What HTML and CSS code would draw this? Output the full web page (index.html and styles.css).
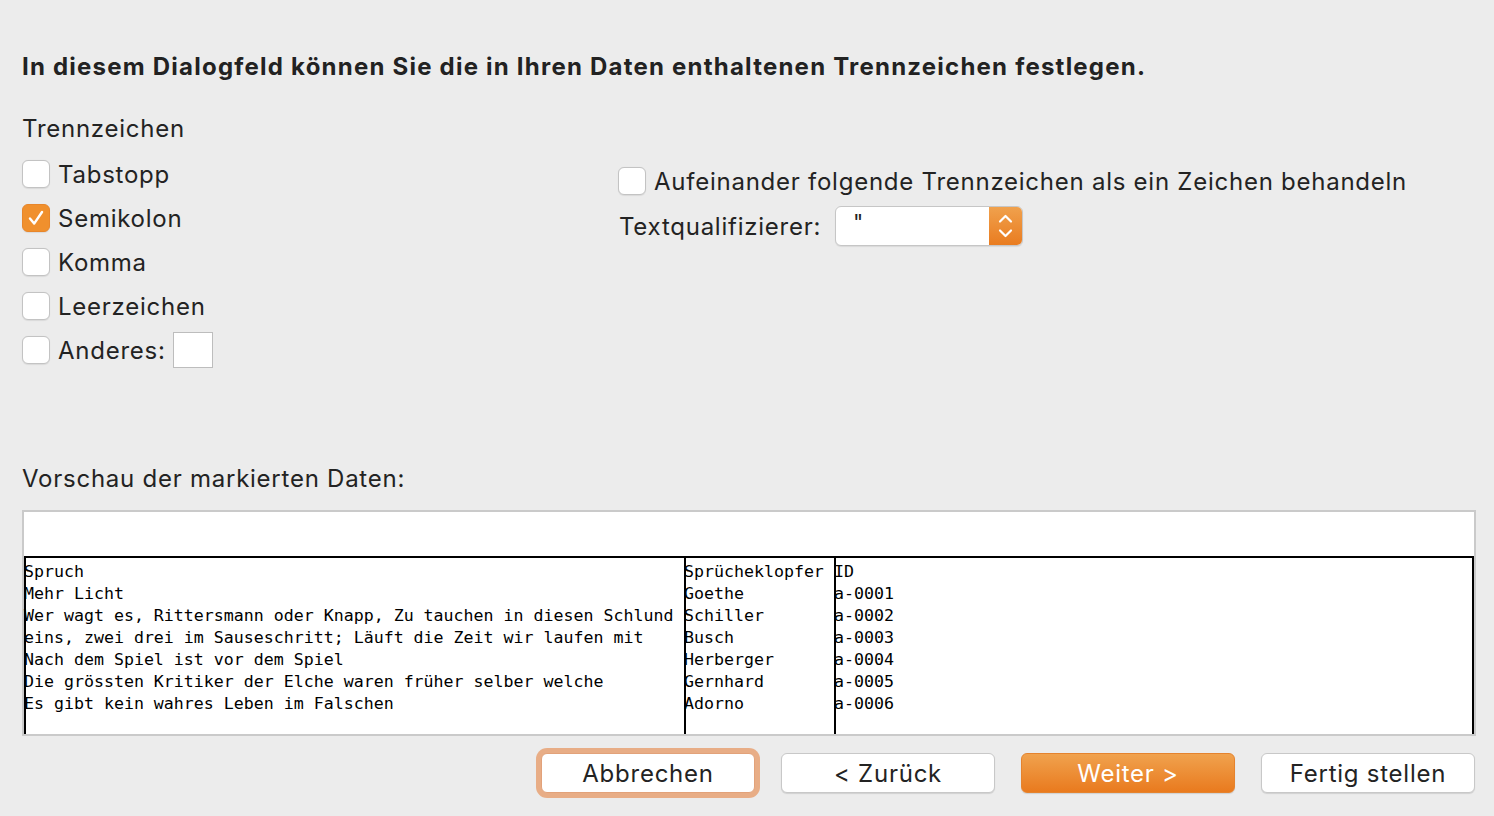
FILE: index.html
```html
<!DOCTYPE html>
<html lang="de">
<head>
<meta charset="utf-8">
<title>Textkonvertierungs-Assistent</title>
<link rel="stylesheet" href="styles.css">
</head>
<body>
<div class="dialog">
  <h1 class="title">In diesem Dialogfeld können Sie die in Ihren Daten enthaltenen Trennzeichen festlegen.</h1>

  <div class="options">
    <div class="col-left">
      <div class="group-label">Trennzeichen</div>
      <label class="check-row"><span class="box"></span><span>Tabstopp</span></label>
      <label class="check-row"><span class="box checked"><svg viewBox="0 0 28 28" width="28" height="28"><path d="M7.5 14.5 L12 20 L20.5 7.5" fill="none" stroke="#fff" stroke-width="2.6" stroke-linecap="round" stroke-linejoin="round"/></svg></span><span>Semikolon</span></label>
      <label class="check-row"><span class="box"></span><span>Komma</span></label>
      <label class="check-row"><span class="box"></span><span>Leerzeichen</span></label>
      <label class="check-row"><span class="box"></span><span>Anderes:</span><span class="other-input"></span></label>
    </div>
    <div class="col-right">
      <label class="check-row"><span class="box"></span><span>Aufeinander folgende Trennzeichen als ein Zeichen behandeln</span></label>
      <div class="qual-row">
        <span>Textqualifizierer:</span>
        <div class="select">
          <span class="select-value">"</span>
          <span class="stepper"><svg viewBox="0 0 33 40" width="33" height="40"><path d="M11 15.5 L16.5 10 L22 15.5" fill="none" stroke="#fff" stroke-width="2.2" stroke-linecap="round" stroke-linejoin="round"/><path d="M11 24.5 L16.5 30 L22 24.5" fill="none" stroke="#fff" stroke-width="2.2" stroke-linecap="round" stroke-linejoin="round"/></svg></span>
        </div>
      </div>
    </div>
  </div>

  <div class="preview-label">Vorschau der markierten Daten:</div>
  <div class="preview">
    <div class="preview-head"></div>
    <div class="preview-table">
      <div class="pcol pcol-1">
        <div>Spruch</div>
        <div>Mehr Licht</div>
        <div>Wer wagt es, Rittersmann oder Knapp, Zu tauchen in diesen Schlund</div>
        <div>eins, zwei drei im Sauseschritt; Läuft die Zeit wir laufen mit</div>
        <div>Nach dem Spiel ist vor dem Spiel</div>
        <div>Die grössten Kritiker der Elche waren früher selber welche</div>
        <div>Es gibt kein wahres Leben im Falschen</div>
      </div>
      <div class="pcol pcol-2">
        <div>Sprücheklopfer</div>
        <div>Goethe</div>
        <div>Schiller</div>
        <div>Busch</div>
        <div>Herberger</div>
        <div>Gernhard</div>
        <div>Adorno</div>
      </div>
      <div class="pcol pcol-3">
        <div>ID</div>
        <div>a-0001</div>
        <div>a-0002</div>
        <div>a-0003</div>
        <div>a-0004</div>
        <div>a-0005</div>
        <div>a-0006</div>
      </div>
    </div>
  </div>

  <div class="buttons">
    <button class="btn focused">Abbrechen</button>
    <button class="btn">&lt; Zurück</button>
    <button class="btn primary">Weiter &gt;</button>
    <button class="btn">Fertig stellen</button>
  </div>
</div>
</body>
</html>
```

FILE: styles.css
```css
html, body {
  margin: 0;
  padding: 0;
  background: #ececec;
}

body {
  width: 1494px;
  height: 816px;
  overflow: hidden;
  font-family: Inter, "Noto Sans", "Liberation Sans", sans-serif;
  color: #232323;
  letter-spacing: 0.75px;
}

.dialog {
  display: flex;
  flex-direction: column;
  padding: 52px 19px 0 22px;
}

.title {
  margin: 0;
  font-size: 24px;
  font-weight: 700;
  line-height: 30px;
  color: #222;
  letter-spacing: 1.22px;
}

.options {
  display: grid;
  grid-template-columns: 596px 1fr;
  margin-top: 32px;
}

.group-label {
  font-size: 24px;
  line-height: 30px;
  margin-bottom: 8px;
}

.check-row {
  display: flex;
  align-items: center;
  height: 44px;
  font-size: 24px;
  gap: 8px;
}

.box {
  width: 26px;
  height: 26px;
  border: 1px solid #c3c3c3;
  border-radius: 6px;
  background: #fff;
  box-sizing: content-box;
  flex: none;
  display: flex;
  align-items: center;
  justify-content: center;
  box-shadow: 0 0.5px 1px rgba(0,0,0,0.08);
}

.box.checked {
  background: #f0902d;
  border-color: #e8862a;
}

.box.checked svg {
  display: block;
}

.other-input {
  width: 38px;
  height: 34px;
  border: 1px solid #bdbdbd;
  background: #fff;
  margin-left: -1px;
}

.col-right {
  padding-top: 45px;
}

.qual-row {
  display: flex;
  align-items: center;
  height: 46px;
  font-size: 24px;
  gap: 14px;
  padding-left: 1px;
}

.select {
  display: flex;
  width: 186px;
  height: 38px;
  border: 1px solid #c6c6c6;
  border-radius: 6px;
  background: #fff;
  overflow: hidden;
  box-shadow: 0 1px 1px rgba(0,0,0,0.08);
}

.select-value {
  flex: 1;
  font-size: 22px;
  line-height: 30px;
  padding-left: 17px;
}

.stepper {
  width: 33px;
  background: linear-gradient(#f0a14d, #e97c20);
  display: flex;
  align-items: center;
  justify-content: center;
}

.stepper svg {
  display: block;
}

.preview-label {
  margin-top: 92px;
  font-size: 24px;
  line-height: 30px;
}

.preview {
  margin-top: 16px;
  width: 1454px;
  height: 226px;
  box-sizing: border-box;
  border: 2px solid #cacaca;
  background: #fff;
  display: flex;
  flex-direction: column;
}

.preview-head {
  height: 44px;
  flex: none;
}

.preview-table {
  flex: 1;
  display: flex;
  border-top: 2px solid #000;
  border-left: 2px solid #000;
  border-right: 2px solid #000;
  font-family: "DejaVu Sans Mono", "Liberation Mono", monospace;
  font-size: 16.6px;
  line-height: 22px;
  letter-spacing: 0;
  color: #000;
}

.pcol {
  white-space: nowrap;
  padding-top: 3px;
}

.pcol > div {
  margin-left: -2px;
}

.pcol-1 {
  width: 658px;
  border-right: 2px solid #000;
}

.pcol-2 {
  width: 148px;
  border-right: 2px solid #000;
}

.pcol-3 {
  flex: 1;
}

.buttons {
  display: flex;
  justify-content: flex-end;
  gap: 26px;
  margin-top: 17px;
}

.btn {
  width: 214px;
  height: 40px;
  border: 1px solid #c8c8c8;
  border-radius: 6px;
  background: #fff;
  font-family: inherit;
  font-size: 24px;
  letter-spacing: 0.75px;
  color: #232323;
  padding: 0;
  box-shadow: 0 1px 1px rgba(0,0,0,0.12);
}

.btn.focused {
  box-shadow: 0 0 0 5px rgba(230, 140, 80, 0.65);
  border-color: #e2a27a;
}

.btn.primary {
  background: linear-gradient(#f0a24e, #e97a1e);
  border-color: #e5832e;
  color: #fff;
}
```
